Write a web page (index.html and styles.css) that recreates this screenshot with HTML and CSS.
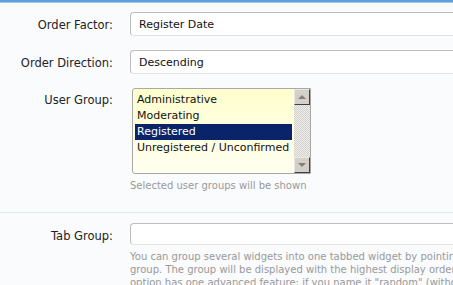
FILE: index.html
```html
<!DOCTYPE html>
<html>
<head>
<title>Widget Options</title>
<link rel="stylesheet" href="styles.css">
</head>
<body>

<div class="topbar"></div>

<div class="form">
  <div class="row">
    <label class="label">Order Factor:</label>
    <div class="field">
      <div class="input">Register Date</div>
    </div>
  </div>

  <div class="row">
    <label class="label">Order Direction:</label>
    <div class="field">
      <div class="input">Descending</div>
    </div>
  </div>

  <div class="row row-groups">
    <label class="label">User Group:</label>
    <div class="field">
      <div class="listbox">
        <div class="options">
          <div class="option">Administrative</div>
          <div class="option">Moderating</div>
          <div class="option selected">Registered</div>
          <div class="option">Unregistered / Unconfirmed</div>
        </div>
        <div class="scrollbar">
          <div class="arrow up"><span></span></div>
          <div class="track"></div>
          <div class="arrow down"><span></span></div>
        </div>
      </div>
      <p class="help">Selected user groups will be shown</p>
    </div>
  </div>
</div>

<div class="form form-second">
  <div class="row row-last">
    <label class="label">Tab Group:</label>
    <div class="field">
      <div class="input input-short"></div>
      <div class="help-wrap">
        <p class="help help-long">You can group several widgets into one tabbed widget by pointing them to the same group. The group will be displayed with the highest display order of its widgets. This option has one advanced feature: if you name it "random" (without quotes), a random widget will be shown.</p>
      </div>
    </div>
  </div>
</div>

</body>
</html>
```

FILE: styles.css
```css
/* Reset */
* {
  margin: 0;
  padding: 0;
  box-sizing: border-box;
}

body {
  font-family: 'DejaVu Sans', sans-serif;
  font-size: 11.5px;
  background-color: #fafbfd;
  color: #222;
  width: 453px;
  height: 285px;
  overflow: hidden;
}

/* Blue strip along the top */
.topbar {
  height: 3px;
  background-color: #5fa0d8;
  border-bottom: 1px solid #9cc6ea;
}

.form {
  padding-top: 9px;
}

.form-second {
  border-top: 1px solid #d9ece9;
  margin-top: 20px;
  padding-top: 10px;
}

.row {
  display: flex;
  align-items: flex-start;
  margin-bottom: 13px;
}

.row-last {
  margin-bottom: 0;
}

.label {
  width: 113px;
  margin-right: 17px;
  text-align: right;
  line-height: 24px;
  padding-top: 1px;
  color: #222;
  flex-shrink: 0;
}

.field {
  flex: 1;
  min-width: 0;
}

/* Text inputs (running off the right edge) */
.input {
  height: 24px;
  line-height: 23px;
  padding-left: 8px;
  font-size: 11px;
  background-color: #fff;
  border: 1px solid #bdbdbd;
  border-right: none;
  border-bottom-color: #e2e2e2;
  border-radius: 4px 0 0 4px;
  color: #111;
}

.input-short {
  height: 22px;
}

/* User group list */
.row-groups {
  margin-bottom: 0;
}

.row-groups .label {
  line-height: 16px;
  padding-top: 4px;
}

.listbox {
  display: flex;
  margin-left: 2px;
  width: 179px;
  height: 86px;
  border: 1px solid #a8a8a8;
  border-radius: 3px 0 0 3px;
  background: linear-gradient(to bottom, #fffecd, #fffff0);
}

.options {
  flex: 1;
  min-width: 0;
  padding: 3px 2px 0 2px;
  font-size: 11px;
}

.option {
  height: 16px;
  line-height: 16px;
  padding-left: 2px;
  color: #111;
  white-space: nowrap;
}

.option.selected {
  background-color: #0a246a;
  color: #fff;
}

.scrollbar {
  width: 16px;
  display: flex;
  flex-direction: column;
}

.arrow {
  height: 16px;
  background-color: #d4d0c8;
  border: 1px solid;
  border-color: #e8e8e8 #404040 #404040 #e8e8e8;
  display: flex;
  align-items: center;
  justify-content: center;
}

.arrow span {
  width: 0;
  height: 0;
  border-left: 4px solid transparent;
  border-right: 4px solid transparent;
}

.arrow.up span {
  border-bottom: 4px solid #808080;
}

.arrow.down span {
  border-top: 4px solid #808080;
}

.track {
  flex: 1;
  background-color: #eeeeee;
  background-image:
    linear-gradient(45deg, #d4d0c8 25%, transparent 25%, transparent 75%, #d4d0c8 75%),
    linear-gradient(45deg, #d4d0c8 25%, transparent 25%, transparent 75%, #d4d0c8 75%);
  background-size: 2px 2px;
  background-position: 0 0, 1px 1px;
}

/* Help text under fields */
.help {
  margin-top: 5px;
  font-size: 10px;
  color: #999;
  line-height: 13px;
  white-space: nowrap;
}

.help-wrap {
  overflow: hidden;
  height: 40px;
}

.help-long {
  margin-top: 5px;
  white-space: normal;
  width: 440px;
}
```
